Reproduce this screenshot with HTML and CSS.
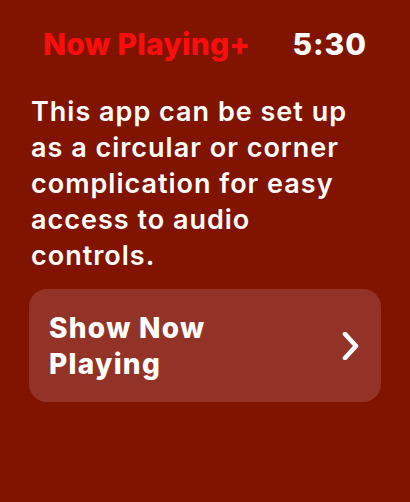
FILE: index.html
```html
<!DOCTYPE html>
<html>
<head>
<meta charset="utf-8">
<link rel="stylesheet" href="styles.css">
</head>
<body>
<div class="screen">
  <header class="header">
    <span class="title">Now Playing+</span>
    <span class="time">5:30</span>
  </header>
  <p class="message">This app can be set up as a circular or corner complication for easy access to audio controls.</p>
  <button class="action">
    <span class="action-label">Show Now Playing</span>
    <svg class="chevron" width="20" height="28" viewBox="0 0 20 28"><path d="M4 2 L15 14 L4 26" fill="none" stroke="#fff" stroke-width="4.6" stroke-linecap="round" stroke-linejoin="round"/></svg>
  </button>
</div>
</body>
</html>
```
FILE: styles.css
```css
* { box-sizing: border-box; }
html, body { margin: 0; padding: 0; background: #801400; }
body { width: 410px; height: 502px; overflow: hidden; font-family: Inter, "Noto Sans", sans-serif; color: #fff; }
.screen { padding: 24px 29px 0 29px; display: flex; flex-direction: column; }
.header { display: flex; justify-content: space-between; align-items: baseline; padding: 0 14px 0 14px; line-height: 40px; }
.title { color: #ff0d0d; font-size: 30px; font-weight: 800; letter-spacing: 0.2px; }
.time { font-size: 30px; font-weight: 800; letter-spacing: 1px; }
.message { margin: 30px 0 0 2px; font-size: 27px; font-weight: 600; line-height: 36px; letter-spacing: 1px; }
.action { margin-top: 15px; display: flex; align-items: center; justify-content: space-between; width: 352px; height: 113px; padding: 0 20px 0 20px; border: none; border-radius: 18px; background: #933227; color: #fff; font-family: inherit; text-align: left; }
.action-label { font-size: 28px; font-weight: 800; line-height: 36px; width: 230px; letter-spacing: 1.3px; }
.chevron { display: block; }
```
